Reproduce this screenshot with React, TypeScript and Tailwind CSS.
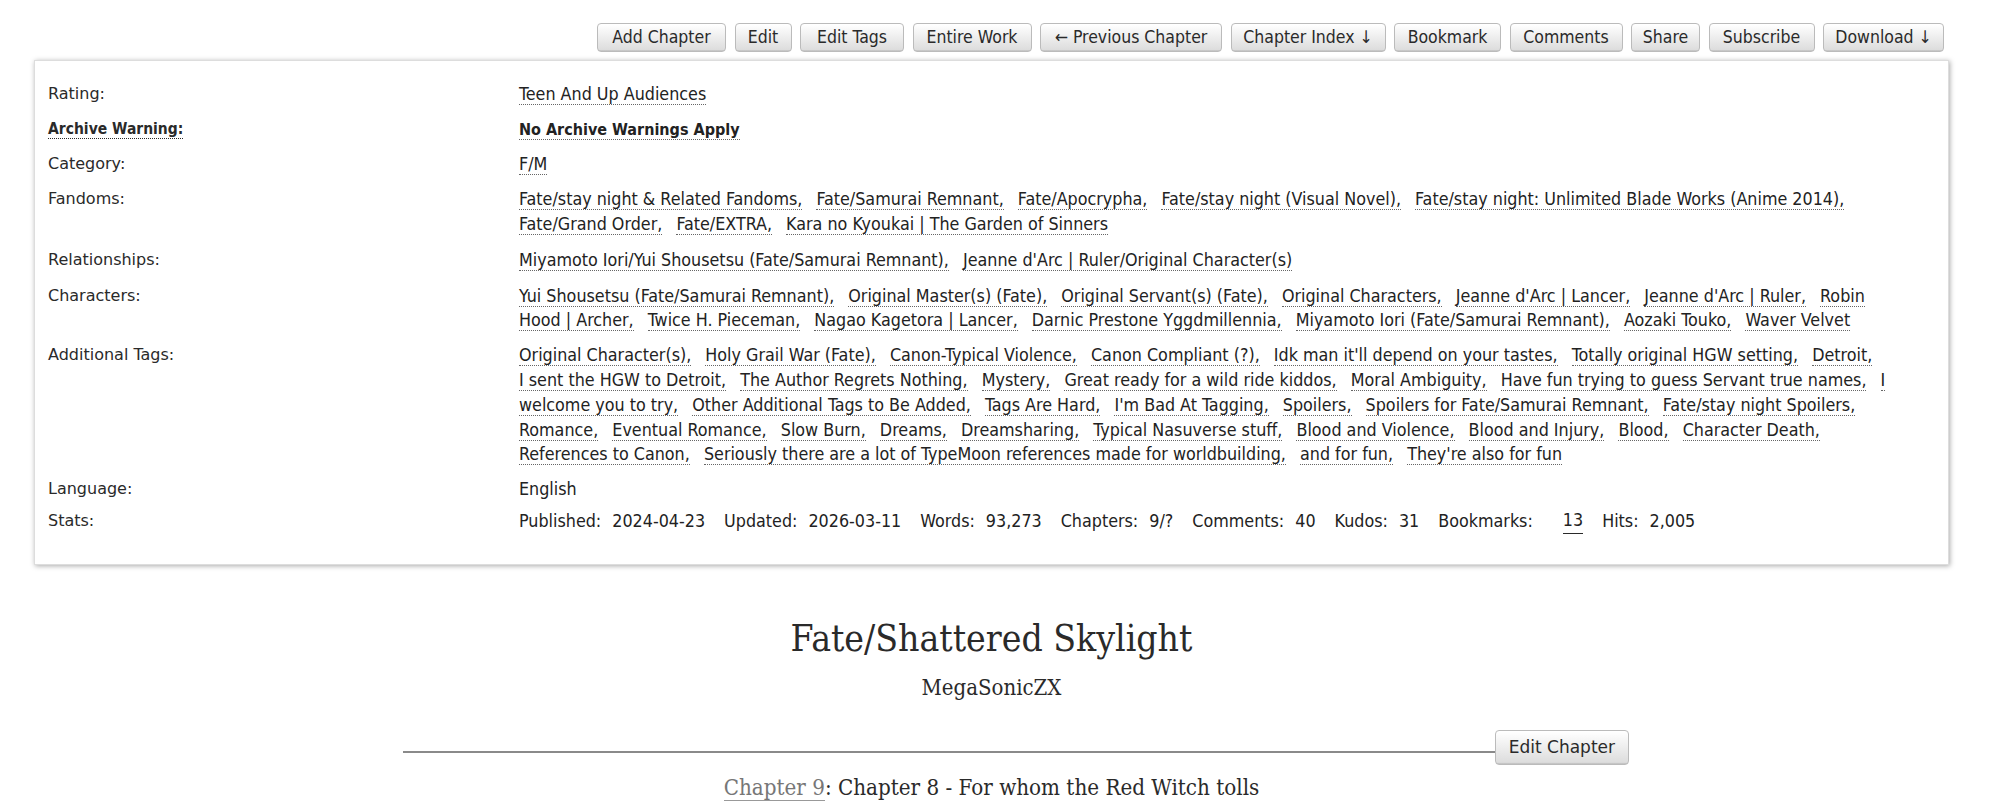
const actions = [
  { label: "Add Chapter", w: "w-[129px]" },
  { label: "Edit", w: "w-[57px]" },
  { label: "Edit Tags", w: "w-[104px]" },
  { label: "Entire Work", w: "w-[119px]" },
  { label: "← Previous Chapter", w: "w-[182px]" },
  { label: "Chapter Index ↓", w: "w-[155px]" },
  { label: "Bookmark", w: "w-[107px]" },
  { label: "Comments", w: "w-[113px]" },
  { label: "Share", w: "w-[69px]" },
  { label: "Subscribe", w: "w-[106px]" },
  { label: "Download ↓", w: "w-[121px]" },
];

const fandoms = [
  "Fate/stay night & Related Fandoms",
  "Fate/Samurai Remnant",
  "Fate/Apocrypha",
  "Fate/stay night (Visual Novel)",
  "Fate/stay night: Unlimited Blade Works (Anime 2014)",
  "Fate/Grand Order",
  "Fate/EXTRA",
  "Kara no Kyoukai | The Garden of Sinners",
];

const relationships = [
  "Miyamoto Iori/Yui Shousetsu (Fate/Samurai Remnant)",
  "Jeanne d'Arc | Ruler/Original Character(s)",
];

const characters = [
  "Yui Shousetsu (Fate/Samurai Remnant)",
  "Original Master(s) (Fate)",
  "Original Servant(s) (Fate)",
  "Original Characters",
  "Jeanne d'Arc | Lancer",
  "Jeanne d'Arc | Ruler",
  "Robin Hood | Archer",
  "Twice H. Pieceman",
  "Nagao Kagetora | Lancer",
  "Darnic Prestone Yggdmillennia",
  "Miyamoto Iori (Fate/Samurai Remnant)",
  "Aozaki Touko",
  "Waver Velvet",
];

const freeforms = [
  "Original Character(s)",
  "Holy Grail War (Fate)",
  "Canon-Typical Violence",
  "Canon Compliant (?)",
  "Idk man it'll depend on your tastes",
  "Totally original HGW setting",
  "Detroit",
  "I sent the HGW to Detroit",
  "The Author Regrets Nothing",
  "Mystery",
  "Great ready for a wild ride kiddos",
  "Moral Ambiguity",
  "Have fun trying to guess Servant true names",
  "I welcome you to try",
  "Other Additional Tags to Be Added",
  "Tags Are Hard",
  "I'm Bad At Tagging",
  "Spoilers",
  "Spoilers for Fate/Samurai Remnant",
  "Fate/stay night Spoilers",
  "Romance",
  "Eventual Romance",
  "Slow Burn",
  "Dreams",
  "Dreamsharing",
  "Typical Nasuverse stuff",
  "Blood and Violence",
  "Blood and Injury",
  "Blood",
  "Character Death",
  "References to Canon",
  "Seriously there are a lot of TypeMoon references made for worldbuilding",
  "and for fun",
  "They're also for fun",
];

const stats: [string, string][] = [
  ["Published:", "2024-04-23"],
  ["Updated:", "2026-03-11"],
  ["Words:", "93,273"],
  ["Chapters:", "9/?"],
  ["Comments:", "40"],
  ["Kudos:", "31"],
  ["Bookmarks:", "13"],
  ["Hits:", "2,005"],
];

function Tags({ tags, bold }: { tags: string[]; bold?: boolean }) {
  return (
    <ul className="inline">
      {tags.map((t, i) => (
        <li key={t} className="inline">
          <a
            href="#"
            className={`border-b border-dotted border-[#666] mr-[9px] ${
              bold ? "font-bold text-[16px]" : ""
            }`}
          >
            {t}
            {i < tags.length - 1 ? "," : ""}
          </a>{" "}
        </li>
      ))}
    </ul>
  );
}

function MetaRow({
  label,
  strong,
  className,
  children,
}: {
  label: string;
  strong?: boolean;
  className?: string;
  children: React.ReactNode;
}) {
  return (
    <div className={`flex ${className ?? ""}`}>
      <dt className="w-[471px] shrink-0 font-['DejaVu_Sans',sans-serif] text-[16px] text-[#2a2a2a]">
        {strong ? (
          <span className="font-['DejaVu_Sans_Condensed','DejaVu_Sans',sans-serif] font-bold border-b border-dotted border-[#2a2a2a] text-[15.5px]">
            {label}
          </span>
        ) : (
          label
        )}
      </dt>
      <dd className="w-[1372px] font-['DejaVu_Sans_Condensed','DejaVu_Sans',sans-serif] text-[17.75px] text-[#222]">
        {children}
      </dd>
    </div>
  );
}

export default function App() {
  return (
    <div className="min-h-[804px] bg-white text-[#2a2a2a]">
      <div className="ml-[34px] w-[1915px] pt-[23px]">
        <ul className="flex justify-end gap-[8.5px] pr-[5px]">
          {actions.map((a) => (
            <li key={a.label}>
              <a
                href="#"
                className={`block h-[29px] ${a.w} rounded-[4px] border border-[#bbb] bg-gradient-to-b from-white from-[2%] via-[#ddd] via-[95%] to-[#bbb] text-center font-['DejaVu_Sans_Condensed','DejaVu_Sans',sans-serif] text-[17.5px] leading-[27px] text-[#2a2a2a]`}
              >
                {a.label}
              </a>
            </li>
          ))}
        </ul>

        <dl className="mt-[8px] border border-[#ddd] bg-white pl-[13px] pt-[20.5px] pb-[30px] leading-[24.5px] shadow-[1px_1px_5px_#aaa]">
          <MetaRow label="Rating:">
            <Tags tags={["Teen And Up Audiences"]} />
          </MetaRow>
          <MetaRow label="Archive Warning:" strong className="mt-[11px]">
            <Tags tags={["No Archive Warnings Apply"]} bold />
          </MetaRow>
          <MetaRow label="Category:" className="mt-[9px]">
            <Tags tags={["F/M"]} />
          </MetaRow>
          <MetaRow label="Fandoms:" className="mt-[11px]">
            <Tags tags={fandoms} />
          </MetaRow>
          <MetaRow label="Relationships:" className="mt-[11.5px]">
            <Tags tags={relationships} />
          </MetaRow>
          <MetaRow label="Characters:" className="mt-[11.5px]">
            <Tags tags={characters} />
          </MetaRow>
          <MetaRow label="Additional Tags:" className="mt-[10.5px]">
            <div className="leading-[24.85px]">
              <Tags tags={freeforms} />
            </div>
          </MetaRow>
          <MetaRow label="Language:" className="mt-[9.5px]">
            English
          </MetaRow>
          <MetaRow label="Stats:" className="mt-[7.5px]">
            <div className="flex gap-[19px]">
              {stats.map(([k, v]) => (
                <div key={k} className="flex gap-[11px]">
                  <span>{k}</span>
                  {k === "Bookmarks:" ? (
                    <a href="#" className="ml-[19px] border-b border-[#2a2a2a] pb-[2px] leading-[22px]">
                      {v}
                    </a>
                  ) : (
                    <span>{v}</span>
                  )}
                </div>
              ))}
            </div>
          </MetaRow>
        </dl>

        <div className="mt-[50px] text-center font-['DejaVu_Serif_Condensed','DejaVu_Serif',serif] text-[#2a2a2a]">
          <h2 className="text-[37px] leading-[48px]">Fate/Shattered Skylight</h2>
          <h3 className="mt-[13px] text-[22px] leading-[24px]">
            <a href="#">MegaSonicZX</a>
          </h3>
        </div>

        <div className="ml-[369px] mt-[30px] flex w-[1226px] items-start">
          <div className="mt-[21px] h-[2px] flex-1 bg-[#8a8a8a]" />
          <a
            href="#"
            className="block h-[35px] rounded-[4px] border border-[#bbb] bg-gradient-to-b from-white from-[2%] via-[#ddd] via-[95%] to-[#bbb] px-[13px] font-['DejaVu_Sans',sans-serif] text-[17px] leading-[33px] text-[#2a2a2a]"
          >
            Edit Chapter
          </a>
        </div>

        <h3 className="mt-[6px] text-center font-['DejaVu_Serif_Condensed','DejaVu_Serif',serif] text-[22.2px] leading-[32px] text-[#2a2a2a]">
          <a href="#" className="text-[#777] border-b border-[#999]">
            Chapter 9
          </a>
          : Chapter 8 - For whom the Red Witch tolls
        </h3>
      </div>
    </div>
  );
}
